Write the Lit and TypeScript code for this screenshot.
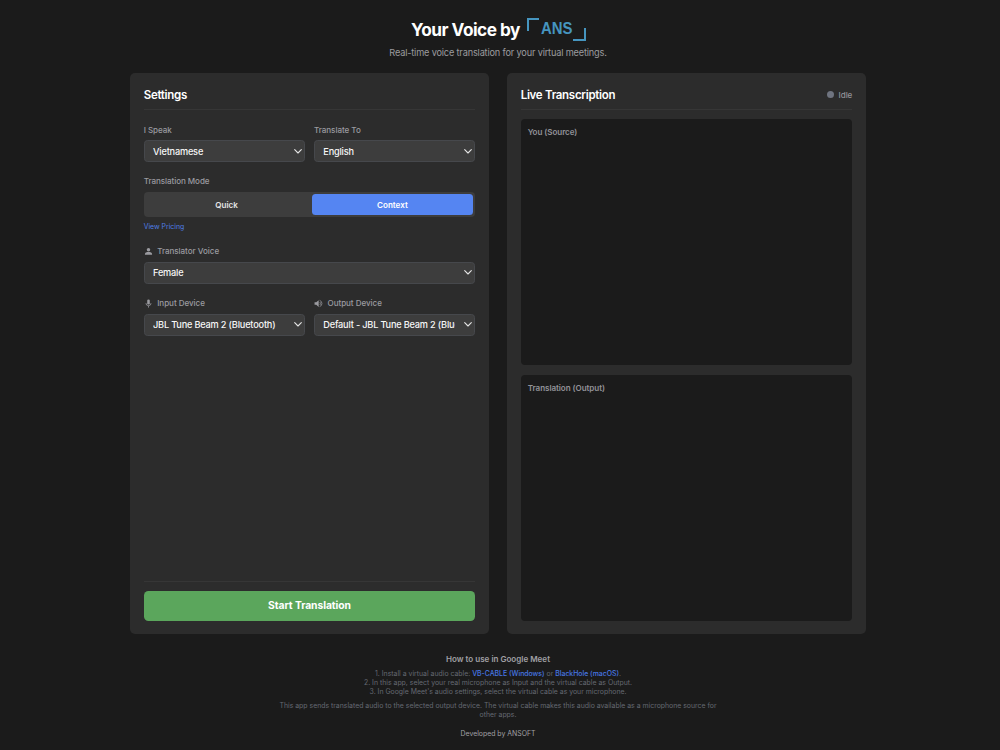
import { LitElement, html, css, svg } from "lit";
import { customElement, property } from "lit/decorators.js";

const icons: Record<string, unknown> = {
  user: svg`<circle cx="12" cy="7.3" r="4.6"/><path d="M2.500 20.500v-2c0-3.400 4.300-5 9.500-5s9.500 1.600 9.500 5v2z"/>`,
  mic: svg`<rect x="8.600" y="1.500" width="6.800" height="13" rx="3.400"/><path d="M5.200 11a6.800 6.800 0 0 0 13.600 0M12 18v5" fill="none" stroke="currentColor" stroke-width="2"/>`,
  speaker: svg`<path d="M1.500 8.500v7h4.500l6.500 5.500V3l-6.500 5.500z"/><path d="M15 8a5 5 0 0 1 0 8M15 3.700a8.700 8.700 0 0 1 0 16.600" fill="none" stroke="currentColor" stroke-width="2"/>`,
};

@customElement("select-field")
class SelectField extends LitElement {
  @property() label = "";
  @property() value = "";
  @property() icon = "";

  static styles = css`
    :host { display: block; min-width: 0; }
    .label { display: flex; align-items: center; height: 12px; margin-bottom: 4.500px; font-size: 8.050px; font-weight: 500; letter-spacing: -0.040px; color: #9b9ba0; }
    .icon { width: 9px; height: 9px; margin-right: 4.500px; fill: currentColor; }
    .select { display: flex; align-items: center; box-sizing: border-box; height: 22px; padding: 0 2.500px 0 8.300px; border: 1px solid #46484c; border-radius: 3.500px; background: #3d3d3d; color: #f7f7f7; font-size: 9.200px; font-weight: 500; letter-spacing: -0.190px; }
    .value { flex: 1; min-width: 0; overflow: hidden; white-space: nowrap; margin-right: 9px; }
    .chevron { width: 8px; height: 5px; fill: none; stroke: #e4e4e4; stroke-width: 1.100; stroke-linecap: round; stroke-linejoin: round; }
  `;

  render() {
    return html`
      <div class="label">
        ${this.icon ? html`<svg class="icon" viewBox="0 0 24 24">${icons[this.icon]}</svg>` : ""}
        ${this.label}
      </div>
      <div class="select">
        <span class="value">${this.value}</span>
        <svg class="chevron" viewBox="0 0 8 5"><path d="M.7.7 4 4 7.300.7"/></svg>
      </div>
    `;
  }
}

@customElement("app-root")
class AppRoot extends LitElement {
  static styles = css`
    :host { display: flex; flex-direction: column; align-items: center; box-sizing: border-box; height: 750px; padding: 16px 4px 0 0; overflow: hidden; background: #1b1b1b; color: #fff; font-family: Inter, "Liberation Sans", sans-serif; }
    h1, h2, h3, p { margin: 0; }
    .title { display: flex; align-items: center; height: 26px; margin-left: 1px; }
    h1 { font-size: 17.250px; line-height: 26px; font-weight: 700; letter-spacing: -0.520px; margin: 1px 7px 0 0; white-space: nowrap; }
    .logo { width: 59px; height: 26px; }
    .logo text { font: 700 16px "Liberation Sans", sans-serif; fill: #4695bf; }
    .logo path { fill: none; stroke: #4695bf; stroke-width: 2; }
    .subtitle { margin-top: 4px; font-size: 9.200px; line-height: 13px; letter-spacing: -0.170px; color: #9b9b9f; }
    main { display: grid; grid-template-columns: 359px 359px; gap: 18px; height: 561px; margin-top: 14px; }
    .card { display: flex; flex-direction: column; box-sizing: border-box; padding: 14px 13.700px 13.500px; border-radius: 5px; background: #2c2c2c; }
    .head { display: flex; align-items: center; justify-content: space-between; box-sizing: border-box; height: 23px; padding-bottom: 7px; border-bottom: 1px solid #363636; flex: none; }
    .head h2 { font-size: 11.500px; line-height: 16px; font-weight: 600; letter-spacing: -0.290px; }
    .status { display: flex; align-items: center; gap: 4.500px; font-size: 8.050px; font-weight: 500; letter-spacing: -0.040px; color: #929298; }
    .dot { width: 7px; height: 7px; border-radius: 50%; background: #6f7480; }
    .row { display: grid; grid-template-columns: 1fr 1fr; gap: 9px; }
    .first { margin-top: 13.500px; }
    .mode-label { height: 12px; margin: 13px 0 5px; font-size: 8.050px; line-height: 12px; font-weight: 500; letter-spacing: -0.060px; color: #9b9ba0; }
    .toggle { display: grid; grid-template-columns: 1fr 1fr; column-gap: 4px; box-sizing: border-box; height: 25px; padding: 2px; border-radius: 4px; background: #3d3d3d; font-size: 8.050px; font-weight: 600; color: #e5e5e5; }
    .option { display: flex; align-items: center; justify-content: center; border-radius: 3.500px; }
    .active { background: #5585f2; color: #fff; }
    .pricing { display: block; margin: 4.500px 0 13.500px; font-size: 6.900px; line-height: 10px; color: #4f7ee6; }
    .devices { margin-top: 13.500px; }
    .action { margin-top: auto; padding-top: 9px; border-top: 1px solid #363636; }
    .start { display: flex; align-items: center; justify-content: center; box-sizing: border-box; height: 30px; padding-bottom: 1px; border-radius: 4.500px; background: #5ba65c; font-size: 10.350px; font-weight: 700; letter-spacing: -0.070px; }
    .panels { display: grid; grid-template-rows: 1fr 1fr; gap: 10px; flex: 1; margin-top: 9px; }
    .panel { box-sizing: border-box; padding: 7px; border-radius: 4px; background: #1b1b1b; font-size: 8.050px; line-height: 12px; font-weight: 600; letter-spacing: -0.050px; color: #929298; }
    footer { width: 442px; margin-top: 18.500px; text-align: center; font-size: 6.900px; line-height: 9.200px; color: #656972; }
    footer h3 { font-size: 8.050px; line-height: 13px; font-weight: 600; color: #a0a0a4; margin-bottom: 3px; }
    .link { color: #4778e5; font-weight: 500; }
    .note { margin-top: 4.700px; }
    .credit { margin-top: 9.500px; color: #a0a0a4; }
  `;

  render() {
    return html`
      <div class="title">
        <h1>Your Voice by</h1>
        <svg class="logo" viewBox="0 0 59 26">
          <path d="M1 15V3h11M58 12v12H46"/>
          <text x="14" y="18" textLength="31.500" lengthAdjust="spacingAndGlyphs">ANS</text>
        </svg>
      </div>
      <p class="subtitle">Real-time voice translation for your virtual meetings.</p>
      <main>
        <section class="card">
          <div class="head"><h2>Settings</h2></div>
          <div class="row first">
            <select-field label="I Speak" value="Vietnamese"></select-field>
            <select-field label="Translate To" value="English"></select-field>
          </div>
          <div class="mode-label">Translation Mode</div>
          <div class="toggle">
            <div class="option">Quick</div>
            <div class="option active">Context</div>
          </div>
          <a class="pricing">View Pricing</a>
          <select-field icon="user" label="Translator Voice" value="Female"></select-field>
          <div class="row devices">
            <select-field icon="mic" label="Input Device" value="JBL Tune Beam 2 (Bluetooth)"></select-field>
            <select-field icon="speaker" label="Output Device" value="Default - JBL Tune Beam 2 (Bluetooth)"></select-field>
          </div>
          <div class="action"><div class="start">Start Translation</div></div>
        </section>
        <section class="card">
          <div class="head">
            <h2>Live Transcription</h2>
            <div class="status"><span class="dot"></span>Idle</div>
          </div>
          <div class="panels">
            <div class="panel">You (Source)</div>
            <div class="panel">Translation (Output)</div>
          </div>
        </section>
      </main>
      <footer>
        <h3>How to use in Google Meet</h3>
        <p>1. Install a virtual audio cable: <a class="link">VB-CABLE (Windows)</a> or <a class="link">BlackHole (macOS)</a>.</p>
        <p>2. In this app, select your real microphone as Input and the virtual cable as Output.</p>
        <p>3. In Google Meet's audio settings, select the virtual cable as your microphone.</p>
        <p class="note">This app sends translated audio to the selected output device. The virtual cable makes this audio available as a microphone source for other apps.</p>
        <p class="credit">Developed by ANSOFT</p>
      </footer>
    `;
  }
}
